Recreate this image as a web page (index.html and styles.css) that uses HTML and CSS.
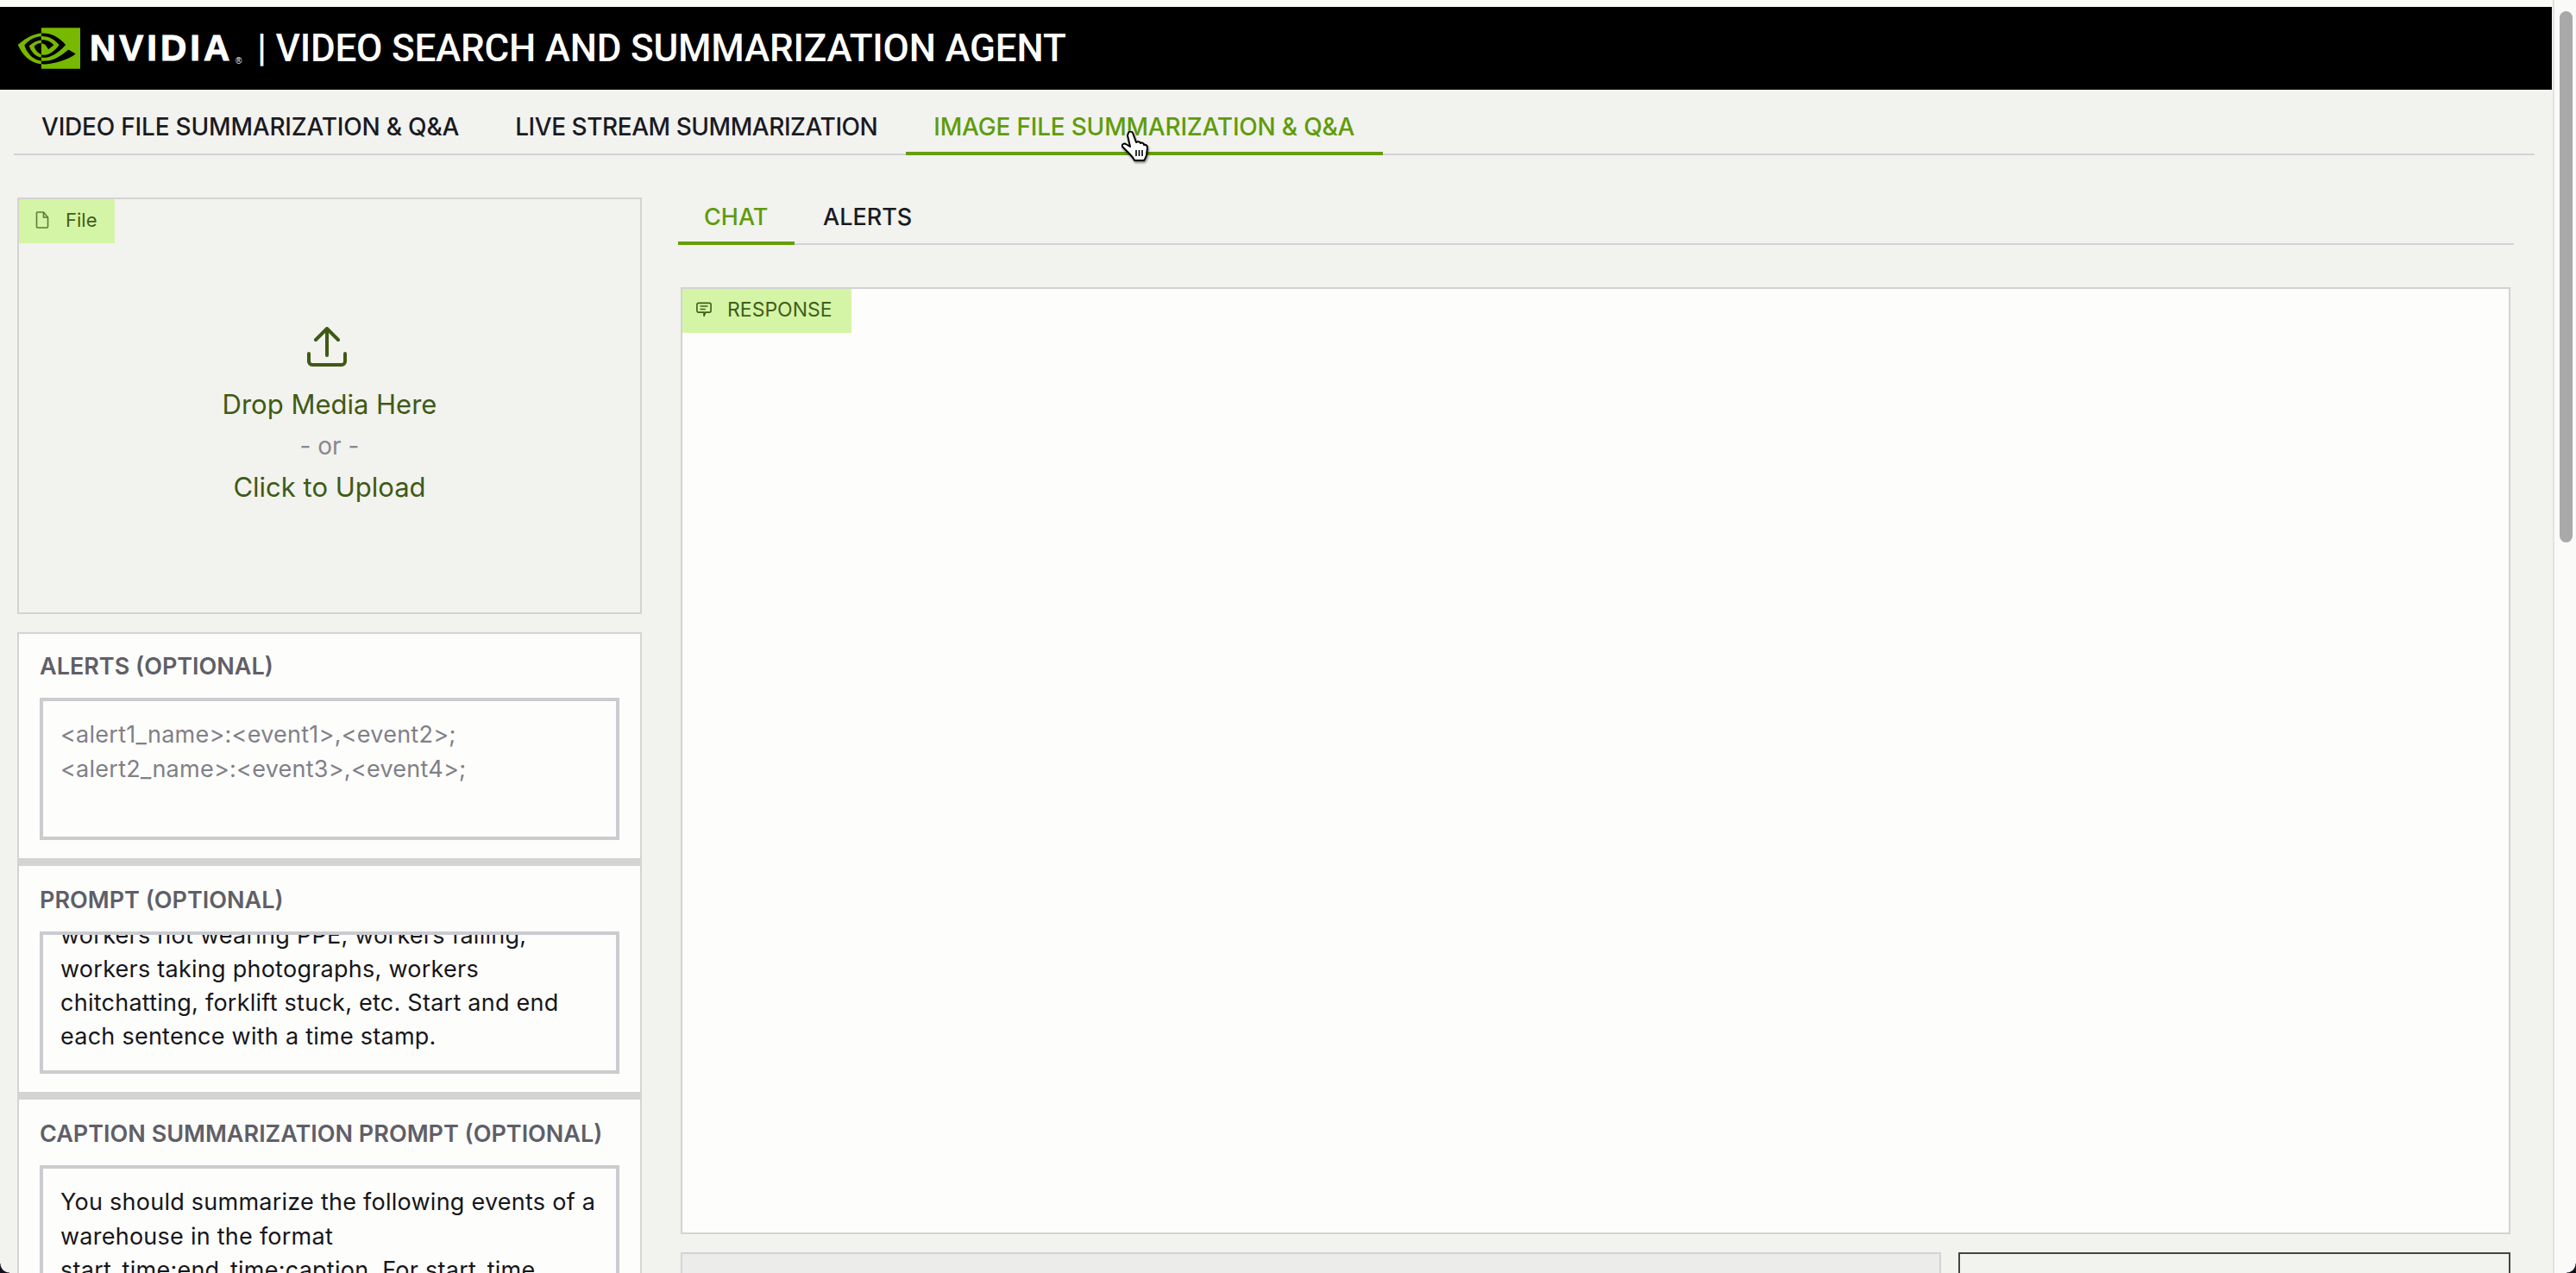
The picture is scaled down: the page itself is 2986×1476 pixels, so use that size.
FILE: index.html
```html
<!DOCTYPE html>
<html lang="en">
<head>
<meta charset="utf-8">
<title>Video Search and Summarization Agent</title>
<link rel="stylesheet" href="styles.css">
</head>
<body>
<div class="page">
  <header class="header">
    <svg class="logo" viewBox="0 4.06 24 15.87" aria-hidden="true"><path d="M8.948 8.798v-1.43a6.7 6.7 0 0 1 .424-.018c3.922-.124 6.493 3.374 6.493 3.374s-2.774 3.851-5.75 3.851c-.398 0-.787-.062-1.158-.185v-4.346c1.528.185 1.837.857 2.747 2.385l2.04-1.714s-1.492-1.952-4-1.952a6.016 6.016 0 0 0-.796.035m0-4.735v2.138l.424-.027c5.45-.185 9.01 4.47 9.01 4.47s-4.08 4.964-8.33 4.964c-.37 0-.733-.035-1.095-.097v1.325c.3.035.61.062.91.062 3.957 0 6.82-2.023 9.593-4.408.459.371 2.34 1.263 2.73 1.652-2.633 2.208-8.772 3.984-12.253 3.984-.335 0-.653-.018-.971-.053v1.864H24V4.063zm0 10.326v1.131c-3.657-.654-4.673-4.46-4.673-4.46s1.758-1.944 4.673-2.262v1.237H8.94c-1.528-.186-2.73 1.245-2.73 1.245s.68 2.412 2.739 3.11M2.456 10.9s2.164-3.197 6.5-3.533V6.201C4.153 6.59 0 10.653 0 10.653s2.35 6.802 8.948 7.42v-1.237c-4.84-.6-6.492-5.936-6.492-5.936z"/></svg>
    <span class="wordmark">NVIDIA<sup class="reg">®</sup></span>
    <h1 class="title">| VIDEO SEARCH AND SUMMARIZATION AGENT</h1>
  </header>

  <nav class="tabs">
    <a class="tab">VIDEO FILE SUMMARIZATION &amp; Q&amp;A</a>
    <a class="tab tab-narrow">LIVE STREAM SUMMARIZATION</a>
    <a class="tab tab-active">IMAGE FILE SUMMARIZATION &amp; Q&amp;A</a>
  </nav>

  <main class="main">
    <section class="left">
      <div class="file">
        <div class="badge badge-file">
          <svg class="badge-icon" viewBox="0 0 16 20" aria-hidden="true"><path d="M2.5 1h7l5 6v11a1 1 0 0 1-1 1h-11a1 1 0 0 1-1-1V2a1 1 0 0 1 1-1z"/><path d="M9.5 1v6h5"/></svg>
          <span>File</span>
        </div>
        <div class="drop">
          <svg class="upload" viewBox="0 0 46 46" aria-hidden="true"><path d="M23 33V3M10 15 23 2l13 13M2 31v9a4 4 0 0 0 4 4h34a4 4 0 0 0 4-4v-9"/></svg>
          <span class="drop-text">Drop Media Here</span>
          <span class="drop-or">- or -</span>
          <span class="drop-text">Click to Upload</span>
        </div>
      </div>

      <div class="group">
        <div class="card">
          <div class="label">ALERTS (OPTIONAL)</div>
          <div class="field field-placeholder">&lt;alert1_name&gt;:&lt;event1&gt;,&lt;event2&gt;;<br>&lt;alert2_name&gt;:&lt;event3&gt;,&lt;event4&gt;;</div>
        </div>
        <div class="card">
          <div class="label">PROMPT (OPTIONAL)</div>
          <div class="field field-end"><span>workers not wearing PPE, workers falling, workers taking photographs, workers chitchatting, forklift stuck, etc. Start and end each sentence with a time stamp.</span></div>
        </div>
        <div class="card">
          <div class="label">CAPTION SUMMARIZATION PROMPT (OPTIONAL)</div>
          <div class="field field-tall">You should summarize the following events of a warehouse in the format start_time:end_time:caption. For start_time<br>and end_time use seconds.</div>
        </div>
      </div>
    </section>

    <section class="right">
      <nav class="subtabs">
        <a class="subtab subtab-active">CHAT</a>
        <a class="subtab">ALERTS</a>
      </nav>
      <div class="response">
        <div class="badge badge-response">
          <svg class="badge-icon-chat" viewBox="0 0 20 19" aria-hidden="true"><path d="M3 1h14a2 2 0 0 1 2 2v8a2 2 0 0 1-2 2h-5l-2 5v-5H3a2 2 0 0 1-2-2V3a2 2 0 0 1 2-2z"/><path d="M5 5h10M5 9h7"/></svg>
          <span>RESPONSE</span>
        </div>
      </div>
      <div class="bottom">
        <div class="bottom-input"></div>
        <div class="bottom-button"></div>
      </div>
    </section>
  </main>
</div>

<aside class="track"><div class="thumb"></div></aside>

<svg class="cursor" viewBox="0 0 32 36" aria-hidden="true">
  <path class="cursor-hand" d="M8 2C9 0 12 0 13 2L17 13C19 12 21 12 22 14C24 13 26 14 26 16C28 15 30 17 30 19L29 28C28 31 27 33 26 34L15 34C14 31 11 28 8 25L1 18C0 15 3 14 5 15L10 18L7 5Z"/>
  <path class="cursor-bars" d="M17 22v7M20.500 22v7M24 22v7"/>
</svg>
<div class="corner corner-left"></div>
<div class="corner corner-right"></div>
</body>
</html>
```

FILE: styles.css
```css
* { box-sizing: border-box; }

html, body { margin: 0; height: 100%; }

body {
  display: flex;
  height: 100vh;
  overflow: hidden;
  background: #f2f2ef;
  font-family: "Inter", "Liberation Sans", sans-serif;
  color: #111;
}

.page {
  width: 2958px;
  height: 100%;
  display: flex;
  flex-direction: column;
  border-top: 8px solid #fbfbf8;
}

/* Header */
.header {
  flex: none;
  height: 96px;
  background: #000;
  display: flex;
  align-items: center;
  padding-left: 21px;
  color: #fff;
}

.logo { width: 72px; height: 48px; fill: #76b900; flex: none; }

.wordmark {
  margin-left: 11px;
  font-family: "Liberation Sans", sans-serif;
  font-weight: 700;
  font-size: 42px;
  line-height: 48px;
  letter-spacing: 4px;
  -webkit-text-stroke: 1px #fff;
  position: relative;
  width: 194px;
}

.reg {
  font-size: 10px;
  font-weight: 400;
  letter-spacing: 0;
  -webkit-text-stroke: 0;
  position: absolute;
  left: 169px;
  top: 33px;
  line-height: 12px;
}

.title {
  margin: 0;
  font-family: "Roboto", sans-serif;
  font-weight: 500;
  font-size: 44px;
  line-height: 52px;
  letter-spacing: -0.2px;
  white-space: nowrap;
}

/* Top tabs */
.tabs {
  flex: none;
  height: 76px;
  margin: 0 20px 0 16px;
  display: flex;
  border-bottom: 2px solid #d2d2d8;
}

.tab {
  height: 76px;
  padding: 10px 33px 0 32px;
  display: flex;
  align-items: center;
  font-size: 28px;
  font-weight: 500;
  letter-spacing: -0.2px;
  color: #1a1a22;
  white-space: nowrap;
}

.tab-narrow { letter-spacing: -0.45px; }

.tab-active {
  color: #5f9c0a;
  border-bottom: 4px solid #659f00;
  padding-top: 14px;
}

/* Main layout */
.main {
  flex: 1;
  min-height: 0;
  overflow: hidden;
  display: grid;
  grid-template-columns: 724px 2128px;
  column-gap: 42px;
  padding: 49px 0 0 20px;
}

.left { display: flex; flex-direction: column; min-height: 0; }

/* File panel */
.file {
  flex: none;
  height: 483px;
  border: 2px solid #d3d3d3;
  display: flex;
  flex-direction: column;
  position: relative;
}

.badge {
  position: absolute;
  top: 0;
  left: 0;
  height: 51px;
  padding-bottom: 4px;
  background: #d5f5a6;
  display: flex;
  align-items: center;
  font-size: 22px;
  color: #425d1a;
}

.badge-file { width: 111px; padding-left: 19px; gap: 19px; }
.badge-response { width: 196px; padding-left: 16px; gap: 18px; font-size: 23px; }

.badge-icon { width: 16px; height: 20px; fill: none; stroke: #5e7a34; stroke-width: 1.600; }
.badge-icon-chat { width: 18px; height: 18px; fill: none; stroke: #425d1a; stroke-width: 1.800; }

.drop {
  flex: 1;
  display: flex;
  flex-direction: column;
  align-items: center;
  padding-top: 148px;
}

.upload {
  width: 46px;
  height: 46px;
  margin-left: -6px;
  fill: none;
  stroke: #3f5a14;
  stroke-width: 4;
  stroke-linecap: round;
  stroke-linejoin: round;
}

.drop-text { font-size: 31px; line-height: 48px; color: #3f5a14; }
.drop-text:first-of-type { margin-top: 20px; }
.drop-or { font-size: 28px; line-height: 48px; color: #88888f; }

/* Cards */
.group {
  flex: none;
  margin-top: 21px;
  border: 2px solid #d4d4d4;
  border-bottom: 0;
  background: #d4d4d4;
}

.card {
  background: #fdfdfb;
  padding: 25px 24px 21px;
}

.card:first-child { padding-top: 23px; }
.card + .card { margin-top: 9px; }

.label {
  height: 30px;
  margin-bottom: 21px;
  font-size: 27px;
  line-height: 30px;
  font-weight: 600;
  color: #5f5f68;
  white-space: nowrap;
}

.field {
  height: 165px;
  border: 4px solid #cbcbd0;
  padding: 0 20px;
  font-size: 27px;
  line-height: 39.500px;
  letter-spacing: 0.25px;
  color: #16161a;
  overflow: hidden;
}

.field-placeholder { padding-top: 19px; color: #808088; }
.field-end { display: flex; align-items: flex-end; padding-bottom: 20px; line-height: 39px; }
.field-tall { height: 260px; padding-top: 19px; }

/* Right column */
.right { display: flex; flex-direction: column; min-height: 0; }

.subtabs {
  flex: none;
  height: 55px;
  display: flex;
  border-bottom: 2px solid #d2d2d8;
}

.subtab {
  height: 55px;
  padding: 0 32px 10px 33px;
  display: flex;
  align-items: center;
  font-size: 27px;
  font-weight: 500;
  color: #1a1a22;
}

.subtab-active {
  color: #5f9c0a;
  border-bottom: 4px solid #659f00;
  padding: 0 0 6px 30px;
  width: 135px;
}

.response {
  flex: none;
  height: 1098px;
  margin: 49px 4px 0 3px;
  background: #fdfdfb;
  border: 2px solid #d3d3d3;
  position: relative;
}

.bottom {
  flex: none;
  height: 100px;
  margin: 21px 4px 0 3px;
  display: flex;
  gap: 20px;
}

.bottom-input { width: 1461px; background: #ececea; border: 2px solid #d3d3d8; }
.bottom-button { flex: 1; border: 2px solid #444; }

/* Browser scrollbar */
.track {
  flex: 1;
  margin-left: 1px;
  padding: 13px 4px 0 6px;
  background: #fafaf8;
  border-left: 2px solid #e2e2e4;
}

.thumb { height: 616px; border-radius: 8px; background: #a9a9a9; }

/* Over-page items */
.cursor {
  position: absolute;
  left: 1300px;
  top: 152px;
  width: 32px;
  height: 36px;
  filter: drop-shadow(1px 2px 1px rgba(0, 0, 0, 0.45));
}

.cursor-hand { fill: #fff; stroke: #000; stroke-width: 2; stroke-linejoin: round; }
.cursor-bars { fill: none; stroke: #000; stroke-width: 1.600; }

.corner { position: absolute; bottom: 0; width: 11px; height: 11px; }
.corner-left { left: 0; background: radial-gradient(circle at 100% 0, transparent 10px, #14101c 11px); }
.corner-right { right: 0; background: radial-gradient(circle at 0 0, transparent 10px, #14101c 11px); }
```
